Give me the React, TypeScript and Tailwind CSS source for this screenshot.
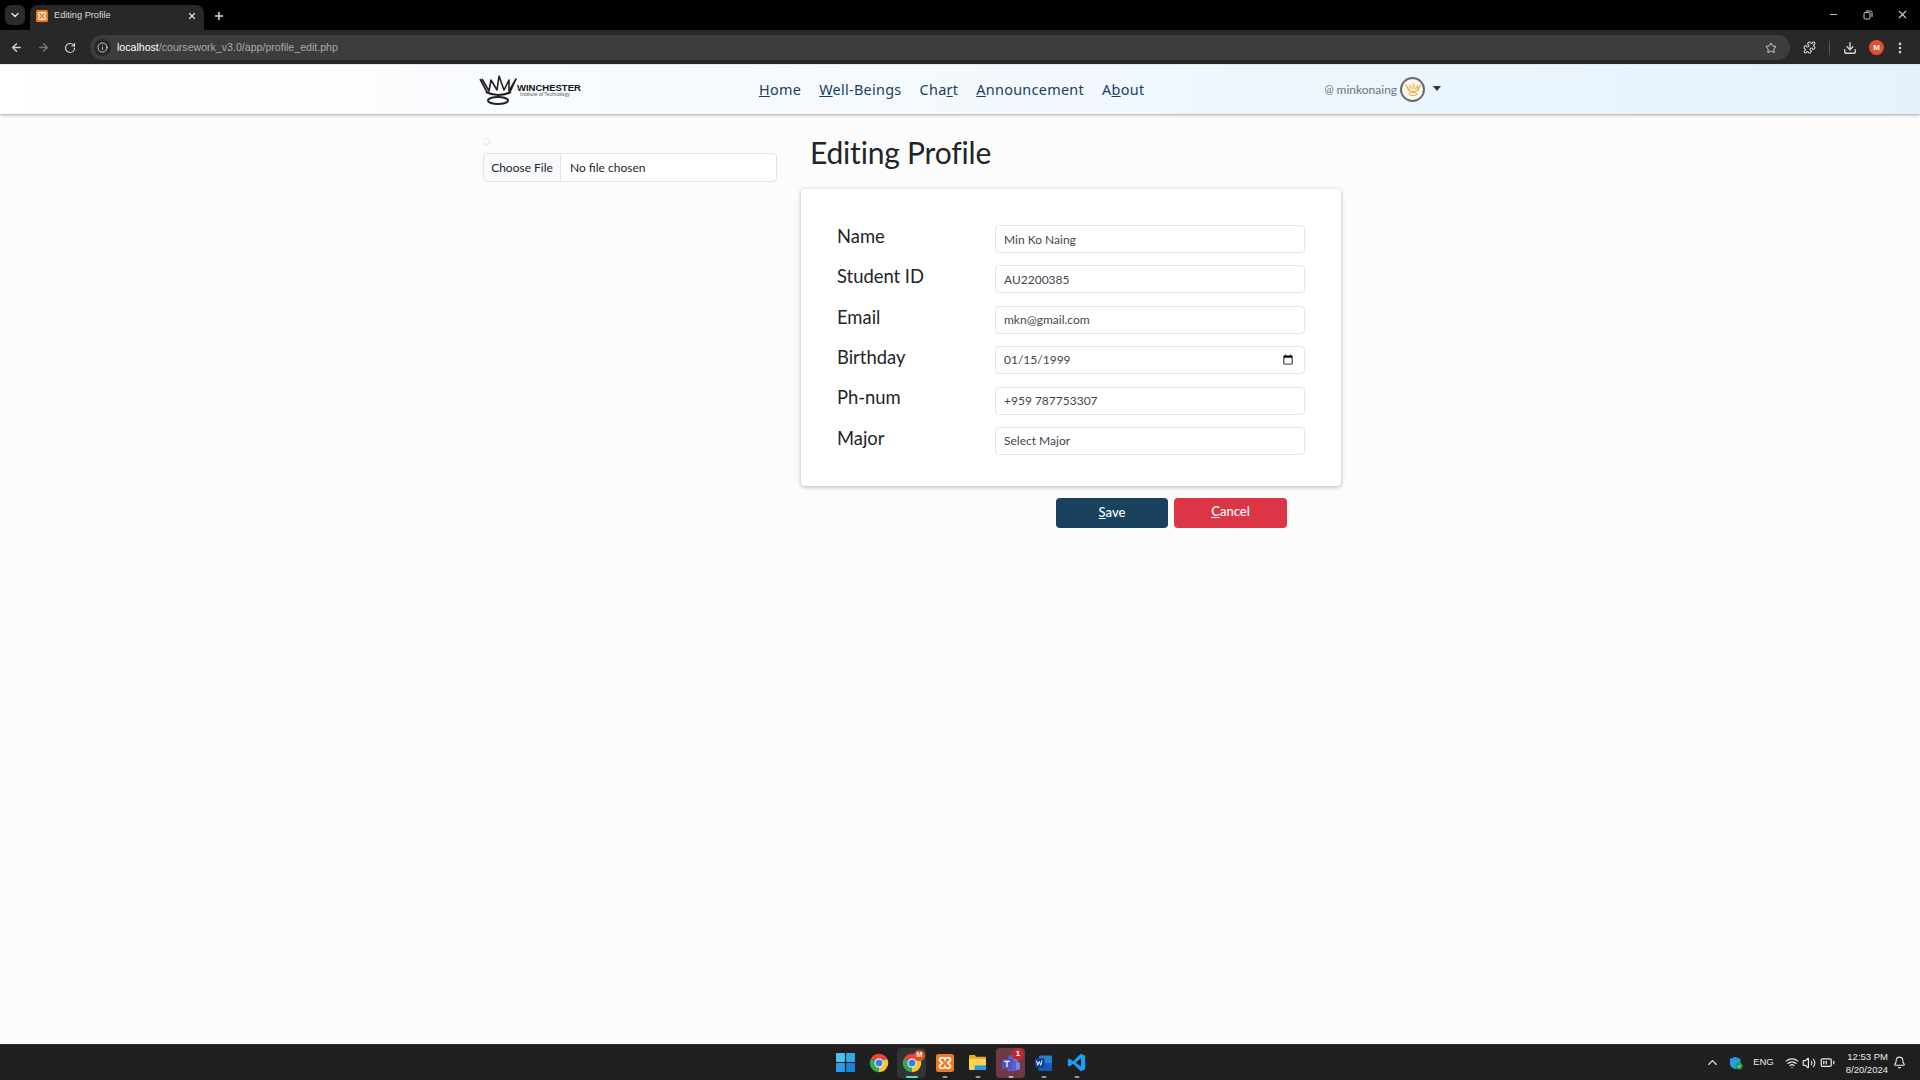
import { ArrowLeft, ArrowRight, RotateCw, Info, Star, Download, Puzzle, EllipsisVertical, ChevronDown, ChevronUp, Plus, X, Minus, Wifi, Volume2, BatteryMedium, Bell } from "lucide-react";

const sans = "font-['Lato','Liberation_Sans',sans-serif]";
const nav = "font-['Noto_Sans','Liberation_Sans',sans-serif]";
const ui = "font-['Liberation_Sans',Arial,sans-serif]";

function Crown({ color = "#222", ring = "#222", width = 38, height = 32 }: { color?: string; ring?: string; width?: number; height?: number }) {
  return (
    <svg width={width} height={height} viewBox="0 0 38 32" fill="none">
      <path d="M1 5 L8 18 M3 5 L10 17 L12 6 L18 16 L20 2 L25 16 L30 6 L30 17 L37 5 L31 18" stroke={color} strokeWidth="1.6" strokeLinejoin="round" />
      <path d="M7 18 Q19 24 32 18" stroke={color} strokeWidth="2.2" />
      <ellipse cx="19" cy="26.5" rx="10" ry="3.6" stroke={ring} strokeWidth="2" />
    </svg>
  );
}

function Xampp({ size = 16 }: { size?: number }) {
  return (
    <svg width={size} height={size} viewBox="0 0 24 24">
      <rect width="24" height="24" rx="3" fill="#ef7a24" />
      <path d="M7 5h3.5l1.5 3 1.5-3H17a2.5 2.5 0 0 1 1.5 4.4L15.5 12l3 2.6A2.5 2.5 0 0 1 17 19h-3.5L12 16l-1.5 3H7a2.5 2.5 0 0 1-1.5-4.4l3-2.6-3-2.6A2.5 2.5 0 0 1 7 5Z" fill="none" stroke="#fff" strokeWidth="2.2" />
    </svg>
  );
}

function Chrome() {
  return (
    <svg width="20" height="20" viewBox="0 0 24 24">
      <path d="M12 12 L2.47 6.5 A11 11 0 0 1 21.53 6.5 Z" fill="#e5453a" />
      <path d="M12 12 L21.53 6.5 A11 11 0 0 1 12 23 Z" fill="#f7c52c" />
      <path d="M12 12 L12 23 A11 11 0 0 1 2.47 6.5 Z" fill="#34a853" />
      <circle cx="12" cy="12" r="5.4" fill="#fff" />
      <circle cx="12" cy="12" r="4.2" fill="#3b7de8" />
    </svg>
  );
}

function TaskIcon({ children, className = "", dot = "" }: { children: React.ReactNode; className?: string; dot?: string }) {
  return (
    <div className={`relative flex h-[30px] w-[29px] shrink-0 items-center justify-center rounded-[4px] ${className}`}>
      {children}
      {dot && <span className={`absolute bottom-0 left-1/2 h-[2px] -translate-x-1/2 rounded-full ${dot}`} />}
    </div>
  );
}

function Taskbar() {
  return (
    <div className="flex h-[36px] shrink-0 items-center bg-[#1f1f1f] border-t border-[#2c2c2c]">
      <div className="ml-[831px] flex items-center gap-[4px]">
        <TaskIcon>
          <svg width="19" height="19" viewBox="0 0 20 20">
            <rect x="0" y="0" width="9.4" height="9.4" rx="1" fill="#4cc2f1" />
            <rect x="10.6" y="0" width="9.4" height="9.4" rx="1" fill="#2fa9ea" />
            <rect x="0" y="10.6" width="9.4" height="9.4" rx="1" fill="#2b9de6" />
            <rect x="10.6" y="10.6" width="9.4" height="9.4" rx="1" fill="#1583d8" />
          </svg>
        </TaskIcon>
        <TaskIcon><Chrome /></TaskIcon>
        <TaskIcon className="bg-[#333]" dot="w-[12px] bg-[#4fd8eb]">
          <Chrome />
          <span className={`absolute right-[1px] top-[2px] flex h-[11px] w-[11px] items-center justify-center rounded-full bg-[#e5502a] text-[7px] font-bold text-white ${ui}`}>M</span>
        </TaskIcon>
        <TaskIcon dot="w-[5px] bg-[#9a9a9a]"><Xampp size={18} /></TaskIcon>
        <TaskIcon dot="w-[5px] bg-[#9a9a9a]">
          <svg width="19" height="17" viewBox="0 0 20 18">
            <path d="M1 2a1 1 0 0 1 1-1h5l2 2h9a1 1 0 0 1 1 1v2H1Z" fill="#e8a91f" />
            <rect x="1" y="5" width="18" height="12" rx="1" fill="#fbd24f" />
            <rect x="7" y="12" width="12" height="5" fill="#2c9be0" />
          </svg>
        </TaskIcon>
        <TaskIcon className="bg-[#6f3a44]" dot="w-[5px] bg-[#e8a0a8]">
          <svg width="20" height="18" viewBox="0 0 20 18">
            <circle cx="15" cy="5" r="2.6" fill="#7b83eb" />
            <rect x="10" y="8" width="9" height="8" rx="2" fill="#7b83eb" />
            <circle cx="10" cy="4" r="3" fill="#5b5fc7" />
            <rect x="6" y="7" width="9" height="10" rx="2" fill="#5b5fc7" />
            <rect x="1" y="5" width="10" height="10" rx="1" fill="#4b53bc" />
            <path d="M3.2 7.4h5.6M6 7.4v5.6" stroke="#fff" strokeWidth="1.3" />
          </svg>
          <span className={`absolute right-[1px] top-[0px] flex h-[12px] w-[12px] items-center justify-center rounded-full bg-[#c4262e] text-[8px] font-bold text-white ${ui}`}>1</span>
        </TaskIcon>
        <TaskIcon dot="w-[5px] bg-[#9a9a9a]">
          <svg width="19" height="18" viewBox="0 0 20 18">
            <rect x="5" y="1" width="14" height="16" rx="1.5" fill="#2b7cd3" />
            <rect x="5" y="9" width="14" height="8" fill="#185abd" />
            <rect x="1" y="4" width="10" height="10" rx="1" fill="#103f91" />
            <path d="M2.6 6.4l1.3 5 1.6-4 1.6 4 1.3-5" stroke="#fff" strokeWidth="1" fill="none" />
          </svg>
        </TaskIcon>
        <TaskIcon dot="w-[5px] bg-[#9a9a9a]">
          <svg width="19" height="19" viewBox="0 0 24 24">
            <path d="M17.5 1 23 3.6v16.8L17.5 23 7.6 13.6l-4.4 3.4L1 15.8V8.2l2.2-1.2 4.4 3.4Z" fill="#1f9cf0" />
            <path d="M17.5 7 11 12l6.5 5Z" fill="#1f1f1f" />
          </svg>
        </TaskIcon>
      </div>
      <div className="ml-auto flex items-center text-[#e8e8e8]">
        <ChevronUp size={15} strokeWidth={2.2} />
        <svg className="ml-[9px]" width="14" height="14" viewBox="0 0 16 16">
          <path d="M7 1 13 3v5c0 3.5-3 6-6 7C3.500 14 1 11.500 1 8V3Z" fill="#2b9be0" />
          <circle cx="11.500" cy="11.500" r="4" fill="#1f9d45" />
          <path d="M9.700 11.500l1.300 1.300 2.200-2.400" stroke="#fff" strokeWidth="1" fill="none" />
        </svg>
        <span className={`ml-[10px] text-[9.5px] ${ui}`}>ENG</span>
        <Wifi className="ml-[11px]" size={14} />
        <Volume2 className="ml-[3px]" size={14} />
        <BatteryMedium className="ml-[4px]" size={15} />
        <div className={`ml-[11px] flex flex-col items-end text-[9.5px] leading-[13px] ${ui}`}>
          <span>12:53 PM</span>
          <span>8/20/2024</span>
        </div>
        <Bell className="ml-[5px] mr-[14px]" size={13} />
      </div>
    </div>
  );
}

function BrowserBar() {
  return (
    <>
      <div className={`flex h-[30px] shrink-0 items-end bg-black text-[#dcdcdc] ${ui}`}>
        <div className="mb-[5px] ml-[5px] flex h-[20px] w-[20px] items-center justify-center rounded-[6px] bg-[#2b2b2b]">
          <ChevronDown size={12} strokeWidth={3} />
        </div>
        <div className="ml-[5px] flex h-[25px] w-[174px] items-center rounded-t-[8px] bg-[#282828] pb-[3px] pl-[6px]">
          <Xampp size={12} />
          <span className="ml-[6px] text-[9.2px]">Editing Profile</span>
          <X className="ml-auto mr-[7px]" size={10} strokeWidth={3} />
        </div>
        <Plus className="mb-[8px] ml-[9px]" size={12} strokeWidth={3} />
        <div className="mb-[9px] ml-auto flex items-center text-[#cfcfcf]">
          <Minus size={11} />
          <svg className="ml-[24px]" width="10" height="10" viewBox="0 0 10 10" fill="none" stroke="currentColor">
            <rect x="1" y="2.5" width="6" height="6.5" rx="1.2" />
            <path d="M3 1h4.500A1.500 1.500 0 0 1 9 2.500V7" />
          </svg>
          <X className="ml-[23px] mr-[11px]" size={13} />
        </div>
      </div>
      <div className={`flex h-[34px] shrink-0 items-center bg-[#282828] pl-[10px] pt-[1px] text-[#d4d4d4] ${ui}`}>
        <ArrowLeft size={13} strokeWidth={2.4} />
        <ArrowRight className="ml-[14px] text-[#777]" size={13} strokeWidth={2.4} />
        <RotateCw className="ml-[14px]" size={12} strokeWidth={2.4} />
        <div className="ml-[14px] flex h-[25px] w-[1700px] items-center rounded-full bg-[#3d3d3d] pl-[4px] pr-[11px]">
          <div className="flex h-[17px] w-[17px] items-center justify-center rounded-full bg-[#282828]">
            <Info size={11} />
          </div>
          <span className="ml-[6px] text-[10.6px] text-[#a9a9a9]"><span className="text-white">localhost</span>/coursework_v3.0/app/profile_edit.php</span>
          <Star className="ml-auto mr-[2px]" size={12} />
        </div>
        <Puzzle className="ml-[13px]" size={13} />
        <span className="ml-[13px] h-[14px] w-px bg-[#555]" />
        <Download className="ml-[13px]" size={14} strokeWidth={2.4} />
        <span className="ml-[12px] flex h-[15px] w-[15px] items-center justify-center rounded-full bg-[#e5502a] text-[8px] font-bold text-white">M</span>
        <EllipsisVertical className="ml-[9px]" size={14} strokeWidth={2.6} />
      </div>
    </>
  );
}

function Navbar() {
  const linkClass = `mt-[1px] text-[14.4px] leading-none tracking-[0.3px] text-[#1a4060] ${nav}`;
  return (
    <div className="relative flex h-[50px] shrink-0 items-center border-t border-[#e8e8e8] bg-gradient-to-r from-white via-[#f4f9fe] to-[#e3f2fd] pl-[479px] shadow-[0_1px_3px_rgba(0,0,0,0.35)]">
      <div className="flex w-[280px] items-center">
        <Crown />
        <div className={`mt-[1px] flex flex-col ${ui}`}>
          <span className="text-[9.5px] font-black leading-[9px] text-[#111]">WINCHESTER</span>
          <span className="pl-[3px] text-[5px] leading-[5px] text-[#555]">Institute of Technology</span>
        </div>
      </div>
      <div className="flex items-center gap-[18px]">
        <span className={linkClass}><u>H</u>ome</span>
        <span className={linkClass}><u>W</u>ell-Beings</span>
        <span className={linkClass}>Cha<u>r</u>t</span>
        <span className={linkClass}><u>A</u>nnouncement</span>
        <span className={linkClass}>A<u>b</u>out</span>
      </div>
      <div className={`ml-[180px] flex items-center text-[12px] text-[#6c757d] ${sans}`}>
        <span className="text-[11px]">@</span>
        <span className="ml-[3px]">minkonaing</span>
        <div className="ml-[3px] flex h-[25px] w-[25px] items-center justify-center rounded-full border-2 border-[#5f6b75] bg-[#fdf8ea]">
          <Crown color="#d9a027" ring="#d9a027" width={16} height={15} />
        </div>
        <span className="mb-[3px] ml-[8px] h-0 w-0 border-x-[4.5px] border-t-[5px] border-x-transparent border-t-[#333]" />
      </div>
    </div>
  );
}

const inputClass = `h-[28px] w-[310px] rounded-[4px] border border-[#e4e7ea] bg-white px-[8px] text-[12px] text-[#3f464d] outline-none ${sans}`;

function Row({ label, children }: { label: string; children: React.ReactNode }) {
  return (
    <div className="flex items-center">
      <label className={`mb-[6px] w-[158px] text-[18.4px] leading-none text-[#212529] ${sans}`}>{label}</label>
      {children}
    </div>
  );
}

export default function App() {
  return (
    <div className="flex h-screen w-full flex-col overflow-hidden bg-[#fcfcfc]">
      <BrowserBar />
      <Navbar />
      <div className="flex flex-1 pl-[483px]">
        <div className="w-[294px] pt-[24px]">
          <div className="mb-[8px] h-[7px] w-[7px] rounded-full border border-[#e2e5e8]" />
          <input
            type="file"
            className={`block h-[29px] w-[294px] rounded-[4px] border border-[#dfe2e6] bg-white text-[12px] text-[#212529] file:mr-[9px] file:h-full file:w-[77px] file:border-0 file:border-r file:border-solid file:border-[#dfe2e6] file:bg-[#f8f9fa] file:text-[12px] file:text-[#212529] ${sans}`}
          />
        </div>
        <div className="ml-[24px] w-[540px]">
          <h1 className={`ml-[9px] mt-[18px] text-[30px] font-normal leading-[40px] tracking-[-0.2px] text-[#212529] ${sans}`}>Editing Profile</h1>
          <div className="mt-[17px] flex h-[297px] flex-col gap-[12.4px] rounded-[4px] bg-white pl-[36px] pt-[36px] shadow-[0_1px_4px_rgba(0,0,0,0.3)]">
            <Row label="Name"><input className={inputClass} defaultValue="Min Ko Naing" /></Row>
            <Row label="Student ID"><input className={inputClass} defaultValue="AU2200385" /></Row>
            <Row label="Email"><input className={inputClass} defaultValue="mkn@gmail.com" /></Row>
            <Row label="Birthday">
              <input
                type="date"
                className={`${inputClass} [&::-webkit-datetime-edit-day-field]:p-0 [&::-webkit-datetime-edit-fields-wrapper]:p-0 [&::-webkit-datetime-edit-month-field]:p-0 [&::-webkit-datetime-edit-text]:p-0 [&::-webkit-datetime-edit-year-field]:p-0 [&::-webkit-datetime-edit]:p-0`}
                defaultValue="1999-01-15"
              />
            </Row>
            <Row label="Ph-num"><input className={inputClass} defaultValue="+959 787753307" /></Row>
            <Row label="Major">
              <select className={`${inputClass} appearance-none`} defaultValue="">
                <option value="">Select Major</option>
              </select>
            </Row>
          </div>
          <div className={`mt-[12px] flex gap-[6px] pl-[255px] text-[13px] text-white ${sans}`}>
            <button type="button" className="h-[30px] w-[112px] rounded-[4px] bg-[#1a425f] font-medium"><u>S</u>ave</button>
            <button type="button" className="h-[30px] w-[113px] rounded-[4px] bg-[#dc3545] pb-[2px] font-medium"><u>C</u>ancel</button>
          </div>
        </div>
      </div>
      <Taskbar />
    </div>
  );
}
